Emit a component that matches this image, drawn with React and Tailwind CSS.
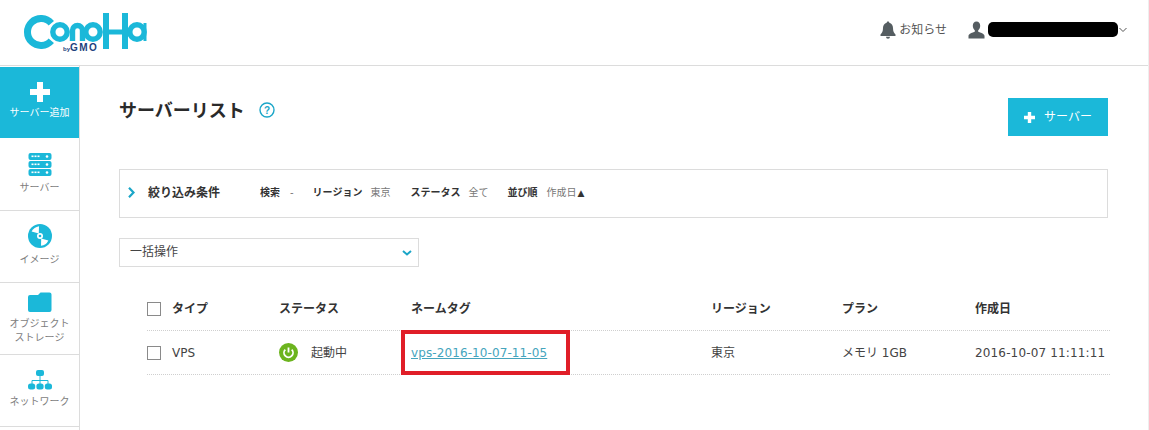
import React from "react";

function Logo() {
  return (
    <div className="relative w-[125px] h-[52px]">
      <svg width="125" height="52" viewBox="0 0 125 52" fill="none" stroke="#1bb8d9">
        <path d="M28.300 19.300 A 13.500 13.500 0 1 0 28.300 36.700" strokeWidth="7" />
        <circle cx="37" cy="28" r="7.200" strokeWidth="5.400" />
        <path d="M49.500 37V26.500a5 5 0 0 1 10 0V37" strokeWidth="5.400" />
        <circle cx="70" cy="28" r="7.200" strokeWidth="5.400" />
        <path d="M83 9V45M102 9V45" strokeWidth="6" />
        <path d="M83 28H102" strokeWidth="5" />
        <circle cx="114" cy="28" r="7.200" strokeWidth="5.400" />
        <path d="M122 19V37" strokeWidth="3" />
      </svg>
      <span className="absolute left-[40px] top-[38px] text-[10px] leading-[12px] font-bold tracking-[1.5px] text-[#1d3f7c] font-['Liberation_Sans',sans-serif]">
        <span className="text-[6px] tracking-normal">by</span>GMO
      </span>
    </div>
  );
}

function Bell() {
  return (
    <svg width="16" height="18" viewBox="0 0 16 18" fill="#555d61">
      <path d="M8 0.5c.8 0 1.3.5 1.3 1.3C11.800 2.400 13 4.500 13 7c0 3.500 1 5 2.500 6.500V15H.5v-1.500C2 12 3 10.500 3 7c0-2.500 1.200-4.600 3.700-5.200C6.700 1 7.200.5 8 .5z" />
      <path d="M6 15.800h4a2 2 0 0 1-4 0z" />
    </svg>
  );
}

function Person() {
  return (
    <svg width="17" height="18" viewBox="0 0 17 18" fill="#555d61">
      <path d="M8.500 0.500c2.300 0 3.700 1.700 3.700 4.200 0 2-1 3.700-2 4.600v1.500c2 .9 6.300 1.800 6.300 4.200V17.500H.5v-2.500c0-2.400 4.300-3.300 6.300-4.200V9.300c-1-.9-2-2.600-2-4.600C4.800 2.200 6.200.5 8.500.5z" />
    </svg>
  );
}

function NavItem({ icon, label, border = true, pt }) {
  return (
    <div className={`h-[72px] ${pt} ${border ? "border-t border-[#dcdcdc]" : ""} flex flex-col items-center`}>
      <div className="shrink-0 flex">{icon}</div>
      <div className="mt-[5px] text-[10px] leading-[14px] text-center text-[#7d7d7d]">{label}</div>
    </div>
  );
}

const ServerIcon = (
  <svg width="24" height="23" viewBox="0 0 24 23" fill="#1bb8d9">
    {[0, 8, 16].map((y) => (
      <g key={y}>
        <rect x="0.500" y={y} width="23" height="7" rx="2" />
        <rect x="3.500" y={y + 2.500} width="2" height="1.600" fill="#fff" />
        <rect x="6.500" y={y + 2.500} width="2" height="1.600" fill="#fff" />
        <rect x="9.500" y={y + 2.500} width="2" height="1.600" fill="#fff" />
        <circle cx="19" cy={y + 3.500} r="1.300" fill="#fff" />
      </g>
    ))}
  </svg>
);

const DiscIcon = (
  <svg width="24" height="24" viewBox="0 0 24 24">
    <circle cx="12" cy="12" r="12" fill="#1bb8d9" />
    <path d="M10.800 9.500 L11 2.200 A 10 10 0 0 0 3.600 7.600z" fill="#fff" />
    <path d="M13.200 14.500 L13 21.800 A 10 10 0 0 0 20.400 16.400z" fill="#fff" />
    <circle cx="12" cy="12" r="3" fill="#fff" />
    <circle cx="12" cy="12" r="1.300" fill="#1bb8d9" />
  </svg>
);

const FolderIcon = (
  <svg width="24" height="20" viewBox="0 0 24 20" fill="#1bb8d9">
    <path d="M2 3h8l2.500-2.500h9a2 2 0 0 1 2 2V18a2 2 0 0 1-2 2H2a2 2 0 0 1-2-2V5a2 2 0 0 1 2-2z" />
  </svg>
);

const NetworkIcon = (
  <svg width="24" height="20" viewBox="0 0 24 20">
    <rect x="8" y="0" width="8" height="6" rx="2" fill="#1bb8d9" />
    <path d="M12 6v8M4 14v-3.500h16V14" stroke="#1bb8d9" fill="none" strokeWidth="1" />
    <rect x="0" y="13.500" width="7.200" height="6" rx="2.500" fill="#1bb8d9" />
    <rect x="8.400" y="13.500" width="7.200" height="6" rx="2.500" fill="#1bb8d9" />
    <rect x="16.800" y="13.500" width="7.200" height="6" rx="2.500" fill="#1bb8d9" />
  </svg>
);

function Sidebar() {
  return (
    <aside className="w-[80px] shrink-0 border-r border-[#dcdcdc] h-[364px] overflow-hidden">
      <div className="h-[71px] bg-[#1bb8d9] flex flex-col items-center text-white mt-px">
        <svg className="mt-[15px]" width="20" height="20" viewBox="0 0 20 20" fill="#fff">
          <path d="M7 0h6v7h7v6h-7v7H7v-7H0V7h7z" />
        </svg>
        <div className="text-[10px] leading-[14px] mt-[4px]">サーバー追加</div>
      </div>
      <NavItem border={false} pt="pt-[15px]" icon={ServerIcon} label="サーバー" />
      <NavItem pt="pt-[13px]" icon={DiscIcon} label="イメージ" />
      <NavItem pt="pt-[9px]" icon={FolderIcon} label={<>オブジェクト<br />ストレージ</>} />
      <NavItem pt="pt-[15px]" icon={NetworkIcon} label="ネットワーク" />
      <div className="border-t border-[#dcdcdc] h-4" />
    </aside>
  );
}

function Checkbox() {
  return <span className="block w-[14px] h-[14px] border border-[#8a8a8a] bg-white" />;
}

const cols = "grid grid-cols-[25px_107px_132px_300px_131px_133px_1fr] items-center";

function FilterItem({ k, v, gap }) {
  return (
    <div className={`flex items-center ${gap}`}>
      <span className="font-bold text-[10px] text-[#333]">{k}</span>
      <span className="text-[10px] text-[#777]">{v}</span>
    </div>
  );
}

export default function App() {
  return (
    <div className="relative w-[1149px] h-[430px] overflow-hidden bg-white text-[#333] font-['DejaVu_Sans','Noto_Sans_CJK_JP',sans-serif] border-r border-[#eeeeee]">
      <header className="h-[66px] border-b border-[#dcdcdc] flex items-center justify-between pl-[23px] pr-[21px]">
        <div className="mb-[6px]"><Logo /></div>
        <div className="flex items-center mb-[6px]">
          <Bell />
          <span className="text-[12px] ml-[3px] text-[#555]">お知らせ</span>
          <span className="ml-[21px]"><Person /></span>
          <div className="ml-[3px] w-[130px] h-[15px] rounded-[5px] bg-black" />
          <svg className="ml-px" width="8" height="6" viewBox="0 0 8 6" fill="none" stroke="#555" strokeWidth="1">
            <path d="M.5 1l3.500 3.500L7.500 1" />
          </svg>
        </div>
      </header>

      <div className="flex">
        <Sidebar />
        <main className="flex-1 pl-[39px] pr-[40px]">
          <div className="flex justify-between items-start pt-[32px] h-[103px]">
            <div className="flex items-center h-[24px]">
              <h1 className="text-[18px] font-bold leading-[22px] mb-[2px] text-[#2a2a2a] font-['Noto_Sans_CJK_JP',sans-serif]">サーバーリスト</h1>
              <svg className="ml-[14px]" width="16" height="16" viewBox="0 0 16 16" fill="none">
                <circle cx="8" cy="8" r="7" stroke="#1ba6c8" strokeWidth="1.400" />
                <text x="8" y="11.500" textAnchor="middle" fontSize="10" fontWeight="700" fill="#1ba6c8" fontFamily="Liberation Sans">?</text>
              </svg>
            </div>
            <button className="w-[100px] h-[38px] bg-[#1bb8d9] text-white flex items-center justify-center gap-[9px] text-[12px]">
              <svg width="11" height="11" viewBox="0 0 11 11" fill="#fff"><path d="M3.800 0h3.400v3.800H11v3.400H7.200V11H3.800V7.200H0V3.800h3.800z" /></svg>
              サーバー
            </button>
          </div>

          <div className="h-[49px] border border-[#dcdcdc] flex items-center pl-[8px] pb-[2px]">
            <svg width="7" height="11" viewBox="0 0 7 11" fill="none" stroke="#1ba6c8" strokeWidth="2.200">
              <path d="M1 .800L5.500 5.500 1 10.200" />
            </svg>
            <span className="ml-[13px] text-[12px] font-bold text-[#333] w-[112px]">絞り込み条件</span>
            <FilterItem k="検索" v="-" gap="gap-[10px]" />
            <div className="w-[19px]" />
            <FilterItem k="リージョン" v="東京" gap="gap-[8px]" />
            <div className="w-[20px]" />
            <FilterItem k="ステータス" v="全て" gap="gap-[8px]" />
            <div className="w-[19px]" />
            <FilterItem k="並び順" v={<>作成日<span className="text-[9px] text-[#333] ml-px">▲</span></>} gap="gap-[9px]" />
          </div>

          <div className="mt-[20px] w-[300px] h-[29px] border border-[#dcdcdc] flex items-center justify-between pl-[10px] pr-[6px]">
            <span className="text-[12px] text-[#444] mb-[2px]">一括操作</span>
            <svg width="10" height="6" viewBox="0 0 10 6" fill="none" stroke="#1ba6c8" strokeWidth="2"><path d="M1 1l4 3.500L9 1" /></svg>
          </div>

          <div className="ml-[28px] -mr-[2px] mt-[25px] text-[12px]">
            <div className={`${cols} h-[39px] pb-[4px] font-bold border-b border-dotted border-[#cfcfcf] text-[#333]`}>
              <Checkbox />
              <span>タイプ</span>
              <span>ステータス</span>
              <span>ネームタグ</span>
              <span>リージョン</span>
              <span>プラン</span>
              <span>作成日</span>
            </div>
            <div className={`${cols} h-[44px] border-b border-dotted border-[#cfcfcf] text-[#444]`}>
              <Checkbox />
              <span>VPS</span>
              <span className="flex items-center gap-[13px]">
                <svg width="19" height="19" viewBox="0 0 19 19" fill="none">
                  <circle cx="9.500" cy="9.500" r="9.500" fill="#6cb41e" />
                  <path d="M6.300 6.600a4.500 4.500 0 1 0 6.400 0" stroke="#fff" strokeWidth="1.800" />
                  <path d="M9.500 4.500v5" stroke="#fff" strokeWidth="1.800" />
                </svg>
                起動中
              </span>
              <a className="text-[#45a5bd] underline tracking-[0.1px]">vps-2016-10-07-11-05</a>
              <span>東京</span>
              <span>メモリ 1GB</span>
              <span className="whitespace-nowrap tracking-[0.15px]">2016-10-07 11:11:11</span>
            </div>
          </div>
        </main>
      </div>
      <div className="absolute left-[401px] top-[330px] w-[169px] h-[45px] border-[4px] border-[#e01e28]" />
    </div>
  );
}
